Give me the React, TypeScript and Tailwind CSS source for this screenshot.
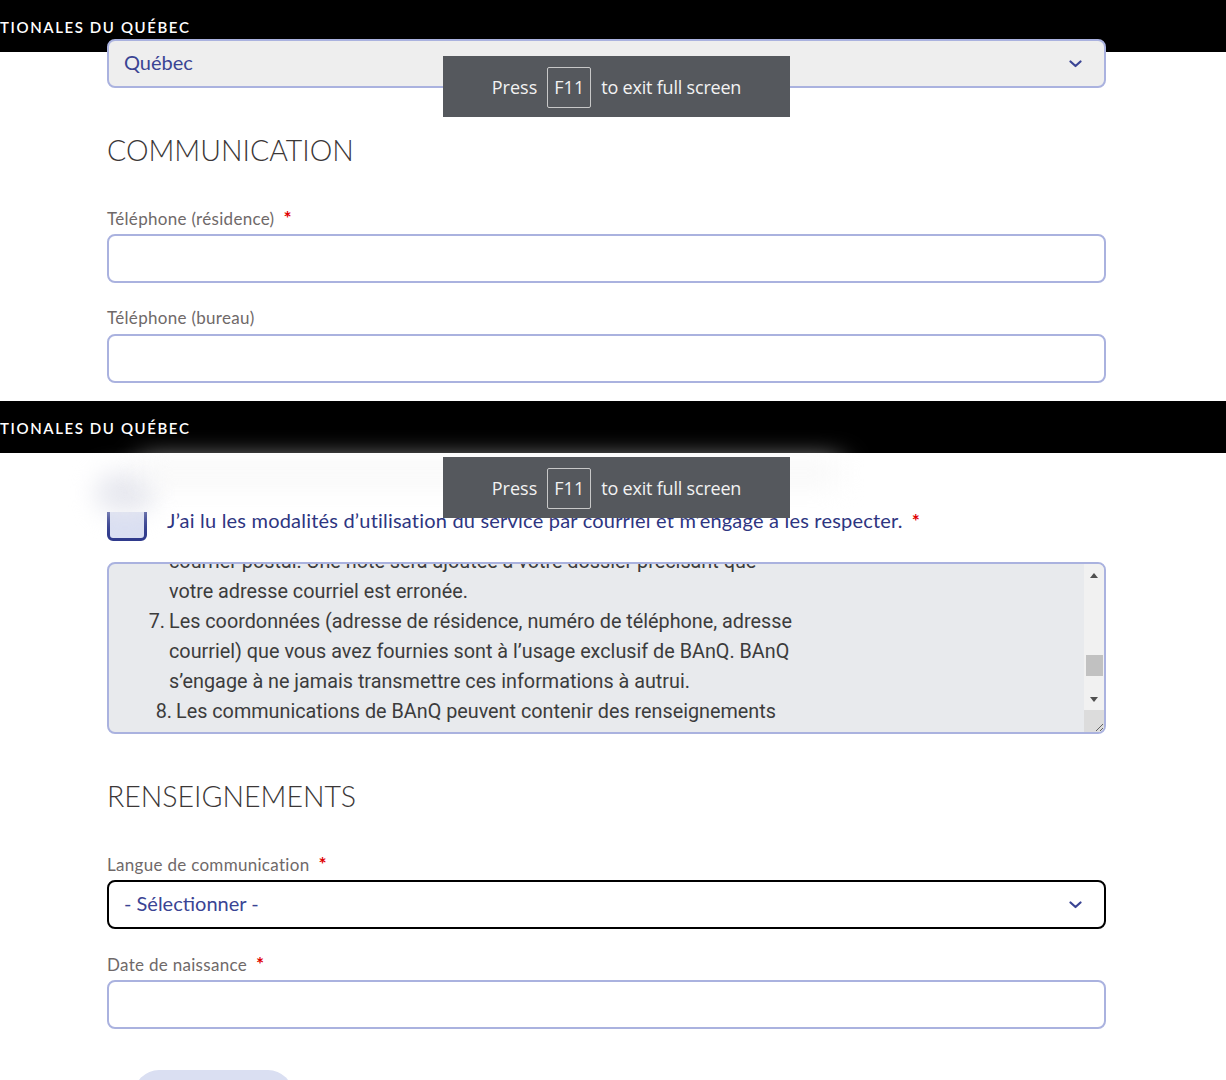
import React from 'react'

const sans = "font-['Lato',sans-serif]"
const labelCls = 'h-[20px] text-[17px] leading-[20px] tracking-[0.3px] text-[#6f6969]'
const inputCls = 'h-[49px] w-full rounded-lg border-2 border-[#aab2df] bg-white'
const headingCls = 'text-[28.5px] leading-[35px] font-light text-[#3b3737]'

function Chevron() {
  return (
    <svg width="13" height="8" viewBox="0 0 13 8" fill="none">
      <path d="M1.5 1.5l5 4.5 5-4.5" stroke="#3a4494" strokeWidth="2.2" strokeLinecap="round" strokeLinejoin="round" />
    </svg>
  )
}

function Req() {
  return <span className="ml-[9px] text-[19px] leading-[20px] font-bold text-[#e00000]">*</span>
}

function TopBar() {
  return (
    <div className="h-[52px] bg-black pt-[18px] text-[15px] leading-[18px] font-semibold tracking-[1.6px] text-white">
      TIONALES DU QUÉBEC
    </div>
  )
}

// chrome's "exit full screen" bubble
function FullscreenHint() {
  return (
    <div className="absolute left-[443px] top-[56px] z-20 flex h-[61px] w-[347px] items-center justify-center bg-[#55585d] pt-[2px] font-['Open_Sans',sans-serif] text-[18px] text-[#f2f2f2]">
      <span>Press</span>
      <span className="mx-[10px] flex h-[41px] w-[44px] items-center justify-center rounded-[2px] border border-[#c8c8c8]">F11</span>
      <span className="tracking-[-0.2px]">to exit full screen</span>
    </div>
  )
}

function Select({ value, focused }: { value: string; focused?: boolean }) {
  return (
    <div
      className={
        focused
          ? 'flex h-[49px] w-full items-center justify-between rounded-lg border-2 border-black bg-white pl-[15px] pr-[22px]'
          : 'flex h-[49px] w-full items-center justify-between rounded-lg border-2 border-[#aab2df] bg-[#eeeeee] pl-[15px] pr-[22px]'
      }
    >
      <span className="pb-[4px] text-[20px] leading-[24px] text-[#3a4494]">{value}</span>
      <Chevron />
    </div>
  )
}

const terms = [
  { n: '', text: 'courrier postal. Une note sera ajoutée à votre dossier précisant que', shift: false },
  { n: '', text: 'votre adresse courriel est erronée.', shift: false },
  { n: '7.', text: 'Les coordonnées (adresse de résidence, numéro de téléphone, adresse', shift: false },
  { n: '', text: 'courriel) que vous avez fournies sont à l’usage exclusif de BAnQ. BAnQ', shift: false },
  { n: '', text: 's’engage à ne jamais transmettre ces informations à autrui.', shift: false },
  { n: '8.', text: 'Les communications de BAnQ peuvent contenir des renseignements', shift: true },
]

function TermsBox() {
  return (
    <div className="flex h-[172px] w-full overflow-hidden rounded-lg border-2 border-[#aab2df] bg-[#e8eaed]">
      <div className="mt-[-17px] flex-1 font-['Roboto',sans-serif] text-[19.8px] leading-[30px] text-[#3c3c3c]">
        {terms.map((t, i) => (
          <div key={i} className={t.shift ? 'flex pl-[7px]' : 'flex'}>
            <span className="w-[60px] shrink-0 pr-[4px] text-right">{t.n}</span>
            <span>{t.text}</span>
          </div>
        ))}
      </div>
      <div className="flex w-[20px] flex-col bg-[#f1f1f1]">
        <div className="flex h-[22px] items-center justify-center">
          <div className="h-0 w-0 border-x-[4px] border-b-[5px] border-x-transparent border-b-[#505050]" />
        </div>
        <div className="flex-1 pt-[69px]">
          <div className="mx-auto h-[21px] w-[17px] bg-[#c1c1c1]" />
        </div>
        <div className="flex h-[22px] items-center justify-center">
          <div className="h-0 w-0 border-x-[4px] border-t-[5px] border-x-transparent border-t-[#505050]" />
        </div>
        <div className="flex h-[22px] items-end justify-end bg-[#dcdcdc]">
          <svg width="12" height="12" viewBox="0 0 12 12">
            <path d="M11 4L4 11M11 8L8 11" stroke="#606060" strokeWidth="1" />
          </svg>
        </div>
      </div>
    </div>
  )
}

export default function App() {
  return (
    <div className={`w-[1226px] bg-white ${sans}`}>
      {/* first capture */}
      <div className="relative h-[401px] overflow-hidden">
        <TopBar />
        <FullscreenHint />
        <div className="relative z-10 -mt-[13px] ml-[107px] w-[999px]">
          <Select value="Québec" />
          <h2 className={`mt-[45px] ${headingCls}`}>COMMUNICATION</h2>
          <div className={`mt-[40px] ${labelCls}`}>
            Téléphone (résidence)
            <Req />
          </div>
          <div className={`mt-[6px] ${inputCls}`} />
          <div className={`mt-[25px] ${labelCls}`}>Téléphone (bureau)</div>
          <div className={`mt-[6px] ${inputCls}`} />
        </div>
      </div>

      {/* second capture */}
      <div className="relative h-[679px] overflow-hidden">
        <TopBar />
        <FullscreenHint />
        <div className="absolute left-[80px] right-0 top-[52px] z-10 h-[59px] bg-white">
          <div className="absolute left-[15px] top-[20px] h-[40px] w-[60px] rounded-full bg-[#e7e8ef] blur-[12px]" />
          <div className="absolute left-[60px] top-[10px] h-[20px] w-[700px] bg-[#f6f6f6] blur-[14px]" />
        </div>
        <div className="ml-[107px] w-[999px]">
          <div className="mt-[48px] flex">
            <div className="h-[40px] w-[40px] shrink-0 rounded-md border-[3px] border-[#2f3a8c] bg-[#dadff2]" />
            <div className="ml-[20px] mt-[7px] h-[24px] text-[20px] leading-[24px] tracking-[0.2px] text-[#2e3581]">
              J’ai lu les modalités d’utilisation du service par courriel et m’engage à les respecter.
              <Req />
            </div>
          </div>
          <div className="mt-[21px]">
            <TermsBox />
          </div>
          <h2 className={`mt-[45px] ${headingCls}`}>RENSEIGNEMENTS</h2>
          <div className={`mt-[40px] ${labelCls}`}>
            Langue de communication
            <Req />
          </div>
          <div className="mt-[6px]">
            <Select value="- Sélectionner -" focused />
          </div>
          <div className={`mt-[25px] ${labelCls}`}>
            Date de naissance
            <Req />
          </div>
          <div className={`mt-[6px] ${inputCls}`} />
          <div className="ml-[27px] mt-[41px] h-[50px] w-[159px] rounded-full bg-[#dadff2]" />
        </div>
      </div>
    </div>
  )
}
